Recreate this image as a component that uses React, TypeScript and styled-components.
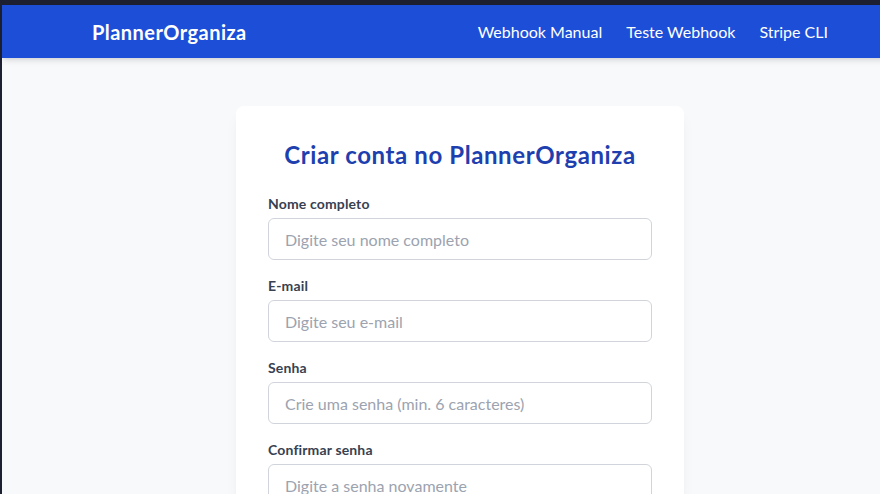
import React from "react";
import styled, { createGlobalStyle } from "styled-components";

const Global = createGlobalStyle`
  html, body { margin: 0; padding: 0; }
  body {
    background: #1c2030;
    overflow: hidden;
    font-family: Lato, "Noto Sans", sans-serif;
  }
  * { box-sizing: border-box; }
`;

const Frame = styled.div`
  padding: 5px 0 0 2px;
  min-height: 100vh;
  display: flex;
`;

const Page = styled.div`
  width: 916px;
  flex-shrink: 0;
  min-height: 100vh;
  background: #f8f9fb;
  display: flex;
  flex-direction: column;
`;

const Nav = styled.nav`
  height: 53px;
  background: #1d4ed8;
  box-shadow: 0 4px 6px -1px rgba(0, 0, 0, 0.1), 0 2px 4px -2px rgba(0, 0, 0, 0.1);
  display: flex;
  align-items: center;
  justify-content: space-between;
  padding: 0 90px;
  position: relative;
  z-index: 1;
`;

const Logo = styled.div`
  color: #ffffff;
  font-size: 20px;
  font-weight: 700;
  line-height: 28px;
  letter-spacing: 0.45px;
`;

const Links = styled.div`
  display: flex;
  gap: 24px;
`;

const NavLink = styled.a`
  color: #ffffff;
  font-size: 16px;
  line-height: 24px;
  text-decoration: none;
`;

const Main = styled.main`
  display: flex;
  justify-content: center;
  padding-top: 48px;
`;

const Card = styled.div`
  width: 448px;
  background: #ffffff;
  border-radius: 8px;
  box-shadow: 0 10px 15px -3px rgba(0, 0, 0, 0.06), 0 4px 6px -4px rgba(0, 0, 0, 0.05);
  padding: 32px;
`;

const Title = styled.h2`
  margin: 0 0 24px;
  text-align: center;
  color: #1e40af;
  font-size: 24px;
  line-height: 32px;
  font-weight: 700;
  letter-spacing: 0.6px;
  position: relative;
  top: 1px;
`;

const Form = styled.form`
  display: flex;
  flex-direction: column;
  gap: 16px;
`;

const Field = styled.div`
  display: flex;
  flex-direction: column;
`;

const Label = styled.label`
  color: #374151;
  font-size: 14px;
  line-height: 20px;
  font-weight: 700;
  letter-spacing: 0.15px;
  margin-bottom: 4px;
`;

const Input = styled.input`
  width: 100%;
  height: 42px;
  padding: 8px 16px;
  border: 1px solid #d1d5db;
  border-radius: 6px;
  font-family: inherit;
  font-size: 16px;
  line-height: 24px;
  color: #111827;
  background: #fff;
  outline: none;
  &::placeholder { color: #9ca3af; }
`;

const fields = [
  { label: "Nome completo", type: "text", placeholder: "Digite seu nome completo" },
  { label: "E-mail", type: "email", placeholder: "Digite seu e-mail" },
  { label: "Senha", type: "password", placeholder: "Crie uma senha (min. 6 caracteres)" },
  { label: "Confirmar senha", type: "password", placeholder: "Digite a senha novamente" },
];

export default function App() {
  return (
    <>
      <Global />
      <Frame>
        <Page>
          <Nav>
            <Logo>PlannerOrganiza</Logo>
            <Links>
              <NavLink href="#">Webhook Manual</NavLink>
              <NavLink href="#">Teste Webhook</NavLink>
              <NavLink href="#">Stripe CLI</NavLink>
            </Links>
          </Nav>
          <Main>
            <Card>
              <Title>Criar conta no PlannerOrganiza</Title>
              <Form onSubmit={(e) => e.preventDefault()}>
                {fields.map((f) => (
                  <Field key={f.label}>
                    <Label>{f.label}</Label>
                    <Input type={f.type} placeholder={f.placeholder} />
                  </Field>
                ))}
              </Form>
            </Card>
          </Main>
        </Page>
      </Frame>
    </>
  );
}
